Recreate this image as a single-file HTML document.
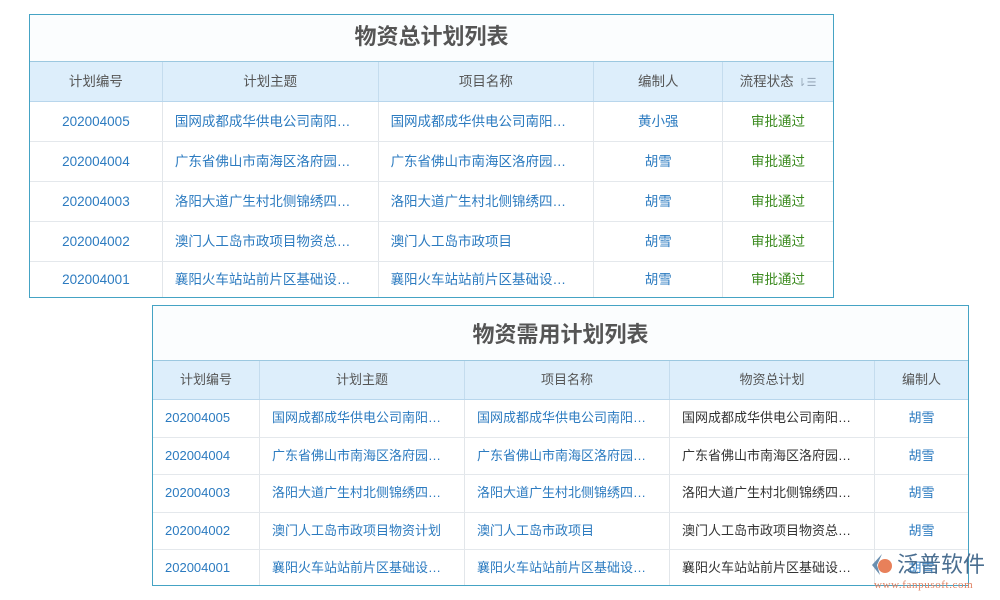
<!DOCTYPE html>
<html><head><meta charset="utf-8"><style>
*{margin:0;padding:0;box-sizing:border-box}
body{width:1000px;height:600px;background:#fff;position:relative;overflow:hidden;font-family:"Liberation Sans","Noto Sans CJK SC",sans-serif;font-size:13.5px}
.t{position:absolute;border:1px solid #45a3c4;background:#fbfdfe;overflow:hidden}
.title{text-align:center;font-weight:bold;color:#555;font-size:22px;border-bottom:1px solid #9cc8e0}
.row{display:flex;border-bottom:1px solid #e4e8ec;background:#fff}
.row.h{background:#ddeefb;color:#555;border-bottom:1px solid #b8d6ec}
.row>div{border-right:1px solid #e2e6ea;white-space:nowrap;overflow:hidden;line-height:inherit}
.row.h>div{border-right:1px solid #c4dcee}
.row>div:last-child{border-right:none}
.c{text-align:center}.l{padding-left:12px}
.b{color:#2c7bc0}.g{color:#3b8a1f}.k{color:#333}
.r1{height:40px;line-height:39px}
.r2{height:37.5px;line-height:36px}
</style></head><body>

<div class="t" style="left:29px;top:14px;width:805px;height:284px">
 <div class="title" style="height:47px;line-height:44px">物资总计划列表</div>
 <div class="row h r1">
  <div class="c" style="width:133px">计划编号</div><div class="c" style="width:216px">计划主题</div><div class="c" style="width:216px">项目名称</div><div class="c" style="width:129px">编制人</div><div class="c" style="width:110px">流程状态&nbsp;<span style="color:#9ab;font-size:11px">⇂☰</span></div>
 </div>
 <div class="row r1"><div class="c b" style="width:133px">202004005</div><div class="l b" style="width:216px">国网成都成华供电公司南阳…</div><div class="l b" style="width:216px">国网成都成华供电公司南阳…</div><div class="c b" style="width:129px">黄小强</div><div class="c g" style="width:110px">审批通过</div></div>
 <div class="row r1"><div class="c b" style="width:133px">202004004</div><div class="l b" style="width:216px">广东省佛山市南海区洛府园…</div><div class="l b" style="width:216px">广东省佛山市南海区洛府园…</div><div class="c b" style="width:129px">胡雪</div><div class="c g" style="width:110px">审批通过</div></div>
 <div class="row r1"><div class="c b" style="width:133px">202004003</div><div class="l b" style="width:216px">洛阳大道广生村北侧锦绣四…</div><div class="l b" style="width:216px">洛阳大道广生村北侧锦绣四…</div><div class="c b" style="width:129px">胡雪</div><div class="c g" style="width:110px">审批通过</div></div>
 <div class="row r1"><div class="c b" style="width:133px">202004002</div><div class="l b" style="width:216px">澳门人工岛市政项目物资总…</div><div class="l b" style="width:216px">澳门人工岛市政项目</div><div class="c b" style="width:129px">胡雪</div><div class="c g" style="width:110px">审批通过</div></div>
 <div class="row r1" style="border-bottom:none;line-height:36px"><div class="c b" style="width:133px">202004001</div><div class="l b" style="width:216px">襄阳火车站站前片区基础设…</div><div class="l b" style="width:216px">襄阳火车站站前片区基础设…</div><div class="c b" style="width:129px">胡雪</div><div class="c g" style="width:110px">审批通过</div></div>
</div>

<div class="t" style="left:152px;top:305px;width:817px;height:281px;font-size:13px">
 <div class="title" style="height:55px;line-height:58px">物资需用计划列表</div>
 <div class="row h" style="height:39px;line-height:38px">
  <div class="c" style="width:107px">计划编号</div><div class="c" style="width:205px">计划主题</div><div class="c" style="width:205px">项目名称</div><div class="c" style="width:205px">物资总计划</div><div class="c" style="width:93px">编制人</div>
 </div>
 <div class="row r2"><div class="l b" style="width:107px">202004005</div><div class="l b" style="width:205px">国网成都成华供电公司南阳…</div><div class="l b" style="width:205px">国网成都成华供电公司南阳…</div><div class="l k" style="width:205px">国网成都成华供电公司南阳…</div><div class="c b" style="width:93px">胡雪</div></div>
 <div class="row r2"><div class="l b" style="width:107px">202004004</div><div class="l b" style="width:205px">广东省佛山市南海区洛府园…</div><div class="l b" style="width:205px">广东省佛山市南海区洛府园…</div><div class="l k" style="width:205px">广东省佛山市南海区洛府园…</div><div class="c b" style="width:93px">胡雪</div></div>
 <div class="row r2"><div class="l b" style="width:107px">202004003</div><div class="l b" style="width:205px">洛阳大道广生村北侧锦绣四…</div><div class="l b" style="width:205px">洛阳大道广生村北侧锦绣四…</div><div class="l k" style="width:205px">洛阳大道广生村北侧锦绣四…</div><div class="c b" style="width:93px">胡雪</div></div>
 <div class="row r2"><div class="l b" style="width:107px">202004002</div><div class="l b" style="width:205px">澳门人工岛市政项目物资计划</div><div class="l b" style="width:205px">澳门人工岛市政项目</div><div class="l k" style="width:205px">澳门人工岛市政项目物资总…</div><div class="c b" style="width:93px">胡雪</div></div>
 <div class="row r2" style="border-bottom:none"><div class="l b" style="width:107px">202004001</div><div class="l b" style="width:205px">襄阳火车站站前片区基础设…</div><div class="l b" style="width:205px">襄阳火车站站前片区基础设…</div><div class="l k" style="width:205px">襄阳火车站站前片区基础设…</div><div class="c b" style="width:93px">胡雪</div></div>
</div>

<div style="position:absolute;left:870px;top:552px;width:130px;height:48px;white-space:nowrap">
 <svg width="26" height="26" style="position:absolute;left:0;top:1px" viewBox="0 0 26 26"><path d="M12 1 L2 12 L10 22 L7 12 Z" fill="#6a8fb0"/><circle cx="15" cy="13" r="7" fill="#e8805a"/></svg>
 <div style="position:absolute;left:27px;top:0px;font-size:22px;line-height:26px;color:#4a6e90">泛普软件</div>
 <div style="position:absolute;left:4px;top:27px;font-size:11px;color:#e08060;font-family:'Liberation Serif',serif;letter-spacing:0.6px">www.fanpusoft.com</div>
</div>
</body></html>
